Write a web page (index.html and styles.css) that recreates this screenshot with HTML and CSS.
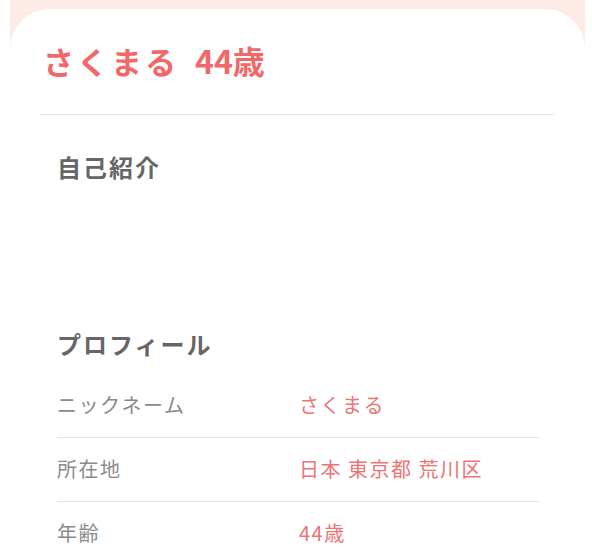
FILE: index.html
```html
<!DOCTYPE html>
<html lang="ja">
<head>
<meta charset="UTF-8">
<meta name="viewport" content="width=device-width, initial-scale=1.0">
<title>さくまる 44歳</title>
<link rel="stylesheet" href="styles.css">
</head>
<body>

<div class="wrap">
    <div class="card">
        <h1 class="name">さくまる<span class="age">44歳</span></h1>

        <div class="content">
            <div class="section intro">
                <h2>自己紹介</h2>
                <p class="intro-text"></p>
            </div>

            <div class="section">
                <h2>プロフィール</h2>
                <div class="row">
                    <div class="label">ニックネーム</div>
                    <div class="value">さくまる</div>
                </div>
                <div class="row">
                    <div class="label">所在地</div>
                    <div class="value">日本 東京都 荒川区</div>
                </div>
                <div class="row">
                    <div class="label">年齢</div>
                    <div class="value">44歳</div>
                </div>
            </div>
        </div>
    </div>
</div>

</body>
</html>
```

FILE: styles.css
```css
body {
    margin: 0;
    padding: 0;
    background: #fff;
    font-family: "Noto Sans CJK JP", "Noto Sans", sans-serif;
}

.wrap {
    margin: 0 7px 0 10px;
    padding-top: 9px;
    background: #fdebe5;
}

.card {
    background: #fff;
    border-radius: 40px 40px 0 0;
    padding: 0 31px 0 30px;
    min-height: 560px;
}

.name {
    margin: 0;
    padding: 30px 3px 32px;
    border-bottom: 1px solid #e2e2e2;
    color: #f26868;
    font-size: 31px;
    font-weight: bold;
    line-height: 42px;
    letter-spacing: 3px;
}

.age {
    margin-left: 16px;
    font-size: 32px;
    letter-spacing: 0;
}

.content {
    padding: 0 15px 0 17px;
}

.section h2 {
    margin: 0;
    color: #666;
    font-size: 24px;
    font-weight: bold;
    line-height: 34px;
    letter-spacing: 2px;
}

.intro {
    padding-top: 35px;
}

.intro-text {
    margin: 0;
    min-height: 143px;
}

.section h2 + .row {
    margin-top: 13px;
}

.row {
    display: grid;
    grid-template-columns: 242px 1fr;
    padding: 18px 0 19px;
    font-size: 20px;
    line-height: 26px;
    border-bottom: 1px solid #e2e2e2;
}

.row:last-child {
    border-bottom: none;
}

.label {
    color: #8a8a8a;
    letter-spacing: 1.5px;
}

.value {
    color: #ec7474;
    letter-spacing: 1.5px;
}
```
